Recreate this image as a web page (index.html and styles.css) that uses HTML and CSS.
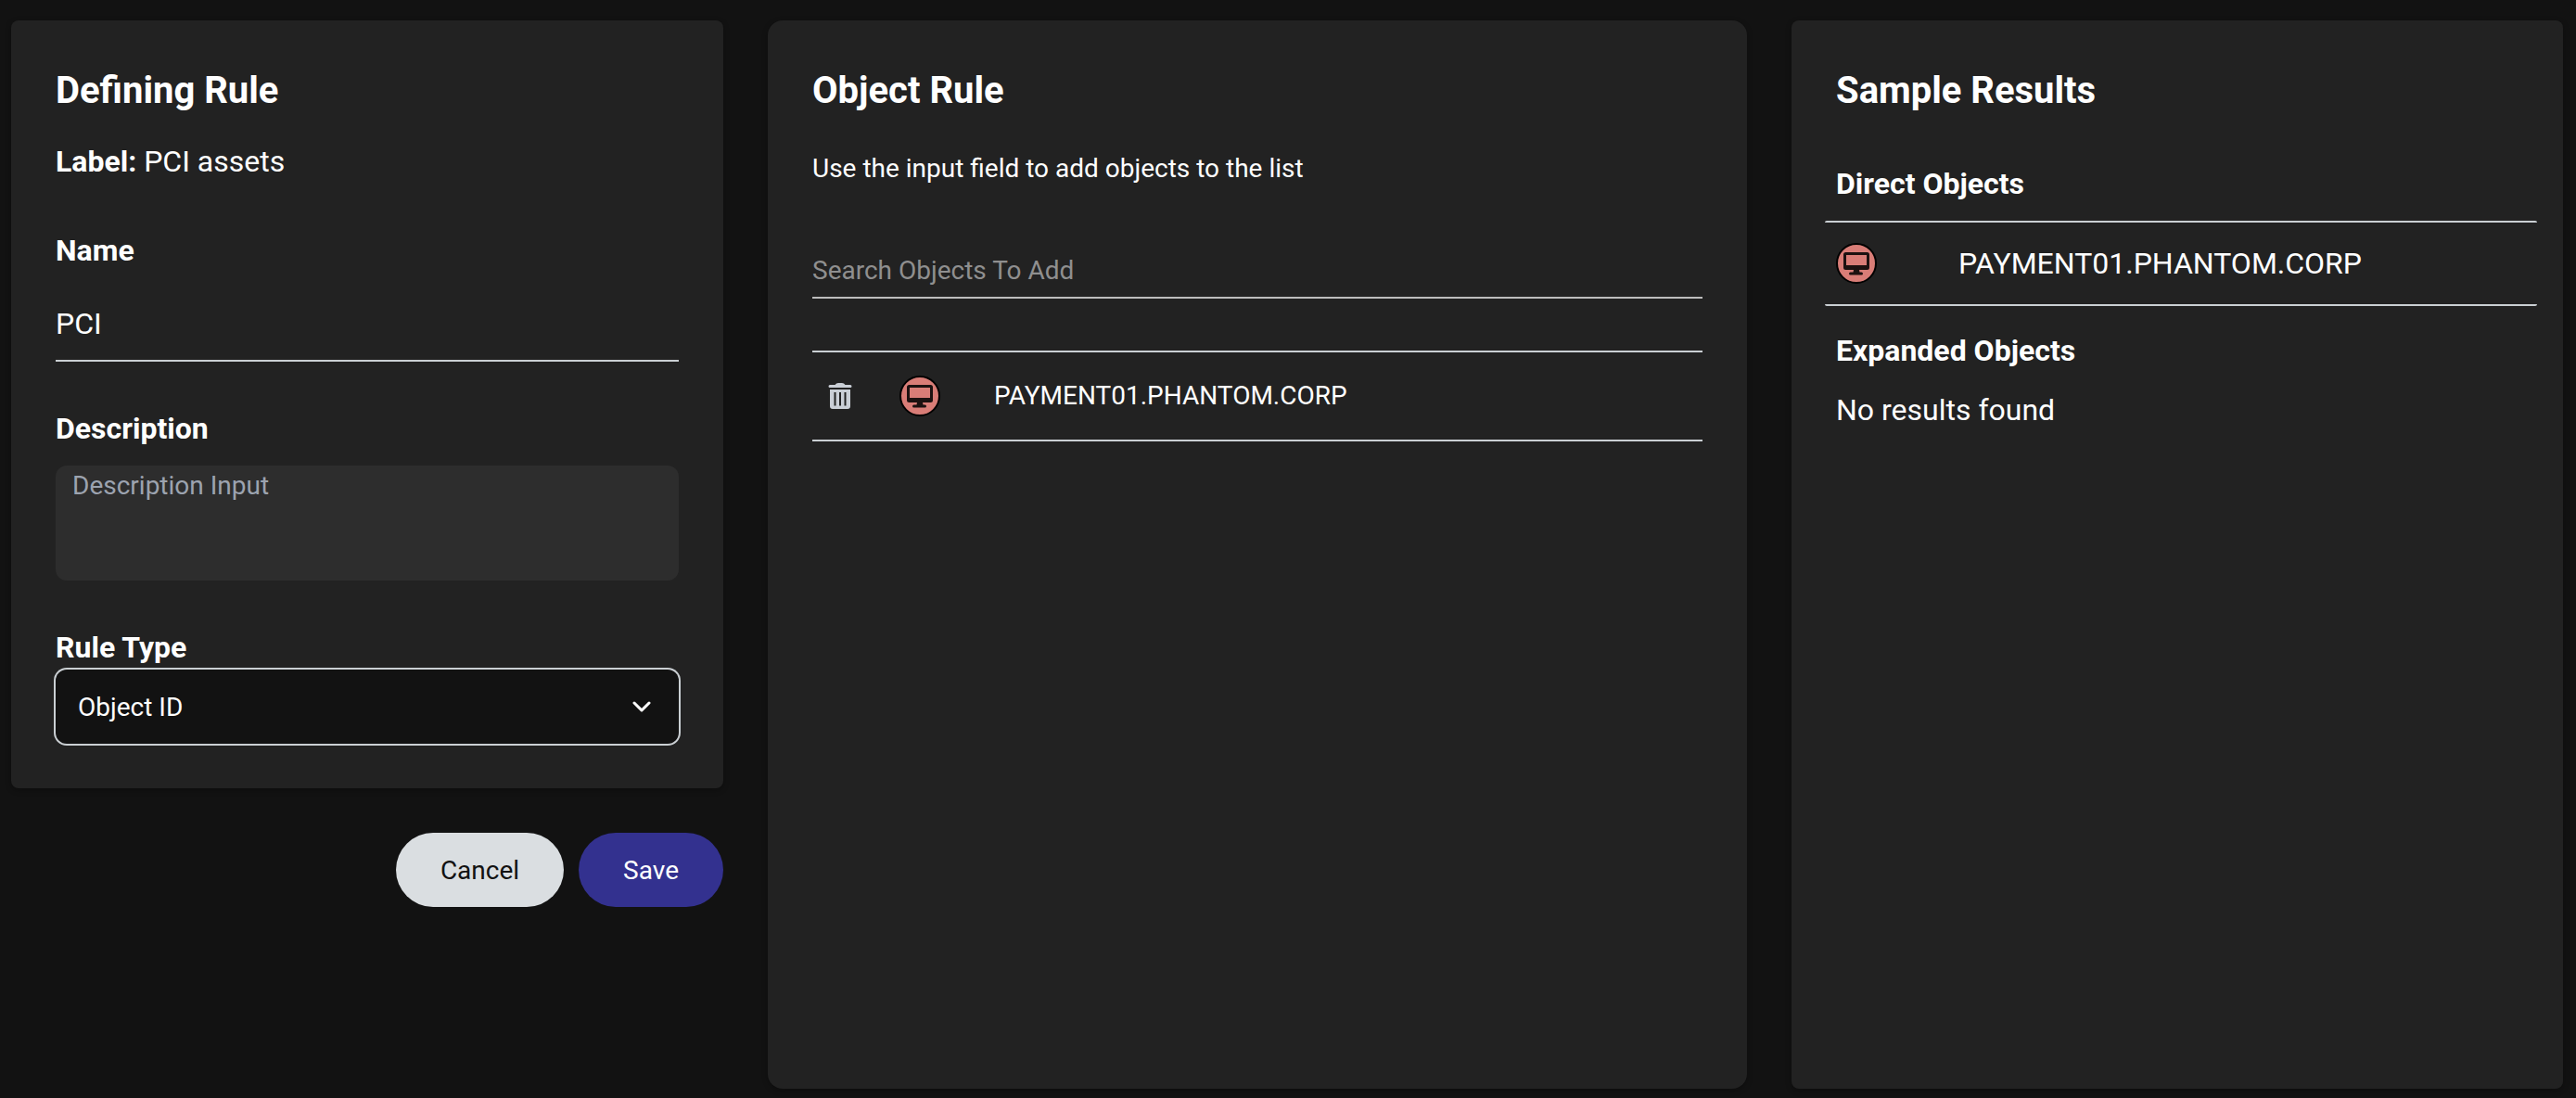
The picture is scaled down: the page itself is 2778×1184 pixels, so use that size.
FILE: index.html
```html
<!DOCTYPE html>
<html lang="en">

<head>
  <meta charset="UTF-8">
  <meta name="viewport" content="width=device-width, initial-scale=1.0">
  <title>Object Rule</title>
  <link rel="stylesheet" href="styles.css">
</head>

<body>
  <svg class="sprite" aria-hidden="true">
    <symbol id="computer" viewBox="0 0 44 44">
      <circle cx="22" cy="22" r="21" fill="#d97d77" stroke="#000" stroke-width="2" />
      <path fill="#1c1110" fill-rule="evenodd" d="M10.500 10h23A2.500 2.500 0 0 1 36 12.500v14a2.500 2.500 0 0 1-2.500 2.500H25l.5 2.500h2a1.500 1.500 0 0 1 0 3h-12a1.500 1.500 0 0 1 0-3h3L19 29h-8.500A2.500 2.500 0 0 1 8 26.500v-14a2.500 2.500 0 0 1 2.500-2.500zM11 13v11h22V13z" />
    </symbol>
  </svg>

  <form class="page">
    <div class="column">
      <section class="card">
        <h1>Defining Rule</h1>
        <p class="tag-label"><strong>Label:</strong> PCI assets</p>
        <div class="field">
          <label for="name">Name</label>
          <input type="text" id="name" class="name-input" value="PCI">
        </div>
        <div class="field">
          <label for="description">Description</label>
          <textarea id="description" class="description-input" placeholder="Description Input"></textarea>
        </div>
        <div class="field">
          <label for="rule-type">Rule Type</label>
          <div class="select">
            <select id="rule-type">
              <option>Object ID</option>
              <option>Cypher</option>
            </select>
            <svg class="chevron" viewBox="0 0 20 12" aria-hidden="true">
              <path d="M2 2l8 8 8-8" fill="none" stroke="#fff" stroke-width="3" stroke-linecap="round" stroke-linejoin="round" />
            </svg>
          </div>
        </div>
      </section>
      <div class="actions">
        <button type="button" class="btn btn-cancel">Cancel</button>
        <button type="submit" class="btn btn-save">Save</button>
      </div>
    </div>

    <section class="card card-rule">
      <h1>Object Rule</h1>
      <p class="hint">Use the input field to add objects to the list</p>
      <input type="text" class="search-input" placeholder="Search Objects To Add" aria-label="Search Objects To Add">
      <ul class="object-list">
        <li class="object-row">
          <button type="button" class="delete" aria-label="Remove">
            <svg viewBox="0 0 26 30" aria-hidden="true">
              <path fill="#cacfd6" fill-rule="evenodd" d="M2 3h5.500L9 1.500Q10 1 11 1h4q1 0 2 .5L18.500 3H24a1.500 1.500 0 0 1 0 3H2a1.500 1.500 0 0 1 0-3zM2 8h22v18a3 3 0 0 1-3 3H5a3 3 0 0 1-3-3zM6.500 11v14.500h2V11zM12 11v14.500h2V11zM17.500 11v14.500h2V11z" />
            </svg>
          </button>
          <svg class="node-icon" aria-hidden="true"><use href="#computer" /></svg>
          <span>PAYMENT01.PHANTOM.CORP</span>
        </li>
      </ul>
    </section>

    <section class="card">
      <h1>Sample Results</h1>
      <h2 class="direct">Direct Objects</h2>
      <ul class="result-list">
        <li class="result-row">
          <svg class="node-icon" aria-hidden="true"><use href="#computer" /></svg>
          <span>PAYMENT01.PHANTOM.CORP</span>
        </li>
      </ul>
      <h2>Expanded Objects</h2>
      <p class="empty">No results found</p>
    </section>
  </form>
</body>

</html>
```
FILE: styles.css
```css
* {
  box-sizing: border-box;
  margin: 0;
  padding: 0;
}

body {
  font-family: Roboto, Arial, sans-serif;
  font-size: 32px;
  line-height: 48px;
  color: #fff;
  background-color: #121212;
}

input,
textarea,
select,
button {
  font-family: inherit;
  color: inherit;
  border: none;
  outline: none;
  background: none;
}

ul {
  list-style: none;
}

.sprite {
  display: none;
}

.page {
  display: grid;
  grid-template-columns: 24fr 33fr 26fr;
  gap: 48px;
  min-height: 100vh;
  padding: 22px 14px 10px 12px;
}

.card {
  padding: 48px;
  background-color: #222;
  border-radius: 8px;
  box-shadow: 0 2px 6px rgba(0, 0, 0, 0.3);
}

.card-rule {
  border-radius: 16px;
}

h1 {
  font-size: 40px;
  line-height: 56px;
}

h2 {
  font-size: 32px;
}

/* Rule form */
.tag-label {
  margin-top: 24px;
}

.field {
  display: flex;
  flex-direction: column;
  margin-top: 48px;
}

.field label {
  font-weight: bold;
}

.name-input {
  height: 80px;
  margin-top: 16px;
  font-size: 32px;
  border-bottom: 2px solid #cacfd3;
}

.description-input {
  height: 124px;
  margin-top: 16px;
  padding: 4px 18px;
  font-size: 28px;
  line-height: 36px;
  background-color: #2d2d2d;
  border-radius: 12px;
  resize: none;
}

.description-input::placeholder {
  color: #9ca3af;
}

.select {
  position: relative;
}

.select select {
  display: block;
  width: 100%;
  height: 80px;
  padding: 0 24px;
  font-size: 28px;
  background-color: #121212;
  border-radius: 12px;
  box-shadow: 0 0 0 2px #cacfd3;
  appearance: none;
}

.chevron {
  position: absolute;
  top: 34px;
  right: 30px;
  width: 20px;
  height: 12px;
  pointer-events: none;
}

.actions {
  display: flex;
  justify-content: flex-end;
  gap: 16px;
  margin-top: 48px;
}

.btn {
  height: 80px;
  padding: 0 48px;
  font-size: 28px;
  border-radius: 40px;
  cursor: pointer;
}

.btn-cancel {
  color: #121212;
  background-color: #dadee1;
}

.btn-save {
  background-color: #33318f;
}

/* Object list */
.hint {
  margin-top: 32px;
  font-size: 28px;
}

.search-input {
  display: block;
  width: 100%;
  height: 60px;
  margin-top: 56px;
  font-size: 28px;
  border-bottom: 2px solid #bdbdbd;
}

.search-input::placeholder {
  color: #8f8f8f;
}

.object-list {
  margin-top: 56px;
  font-size: 28px;
  border-top: 2px solid #cacfd3;
}

.object-row {
  display: flex;
  align-items: center;
  height: 96px;
  border-bottom: 2px solid #cacfd3;
}

.delete {
  display: flex;
  justify-content: center;
  width: 60px;
  margin-right: 34px;
  cursor: pointer;
}

.delete svg {
  width: 26px;
  height: 30px;
}

.node-icon {
  width: 44px;
  height: 44px;
}

.object-row span {
  margin-left: 58px;
}

/* Results */
.direct {
  margin-top: 48px;
}

.result-list {
  margin: 16px -20px 24px -12px;
}

.result-row {
  display: flex;
  align-items: center;
  height: 92px;
  padding-left: 12px;
  border: solid #cacfd3;
  border-width: 2px 0;
  border-radius: 2px;
}

.result-row span {
  margin-left: 88px;
}

.empty {
  margin-top: 16px;
}
```
